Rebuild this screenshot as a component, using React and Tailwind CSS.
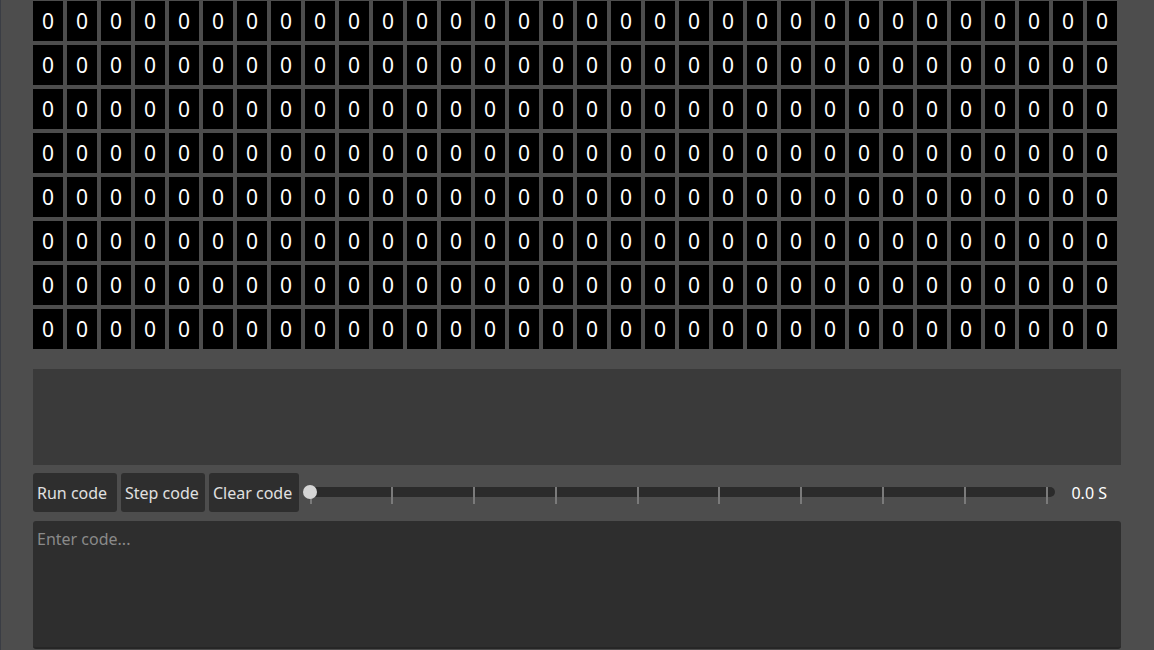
import React, { useState } from 'react';

const ROWS = 8;
const COLS = 32;
const TICKS = [311, 392, 474, 556, 638, 719, 801, 883, 965, 1047];

function Grid() {
    return (
        <div className="flex flex-col gap-[4px]">
            {Array.from({ length: ROWS }).map((_, r) => (
                <div key={r} className="flex gap-[4px]">
                    {Array.from({ length: COLS }).map((_, c) => (
                        <div
                            key={c}
                            className="w-[30px] h-[40px] bg-black text-white flex items-center justify-center text-[21px] leading-none"
                        >
                            0
                        </div>
                    ))}
                </div>
            ))}
        </div>
    );
}

function Slider() {
    return (
        <div className="relative flex-1 h-[39px]">
            <div className="absolute left-0 right-0 top-[14px] h-[10px] rounded-full bg-[#2b2b2b]" />
            {TICKS.map((x) => (
                <div
                    key={x}
                    className="absolute top-[14px] w-[2px] h-[17px] bg-[#7a7a7a]"
                    style={{ left: x - 305 - 1 }}
                />
            ))}
            <div className="absolute left-[-2px] top-[12px] w-[14px] h-[14px] rounded-full bg-[#d6d6d6]" />
        </div>
    );
}

export default function App() {
    const [code, setCode] = useState('');
    return (
        <div
            className="w-[1154px] h-[650px] bg-[#4d4d4d] overflow-hidden border-l border-[#3a3d44] text-[#e0e0e0]"
            style={{ fontFamily: '"Noto Sans", sans-serif' }}
        >
            <div className="w-[1088px] ml-[32px] pt-[1px] flex flex-col">
                <Grid />
                <div className="mt-[20px] h-[96px] bg-[#3a3a3a]" />
                <div className="mt-[8px] flex items-center gap-[4px]">
                    <button className="h-[39px] px-[4px] rounded-[3px] bg-[#2e2e2e] text-[16px] w-[84px] text-left">Run code</button>
                    <button className="h-[39px] px-[4px] rounded-[3px] bg-[#2e2e2e] text-[16px] w-[84px] text-left">Step code</button>
                    <button className="h-[39px] px-[4px] rounded-[3px] bg-[#2e2e2e] text-[16px] w-[90px] text-left">Clear code</button>
                    <div className="ml-[2px] flex-1 flex items-center">
                        <Slider />
                        <div className="w-[66px] text-right pr-[14px] text-[16px] text-white">0.0 S</div>
                    </div>
                </div>
                <textarea
                    value={code}
                    onChange={(e) => setCode(e.target.value)}
                    placeholder="Enter code..."
                    className="mt-[9px] h-[128px] bg-[#2e2e2e] border-b-2 border-[#262626] rounded-[3px] px-[4px] py-[6px] text-[16px] placeholder-[#8a8a8a] outline-none resize-none"
                />
            </div>
        </div>
    );
}
